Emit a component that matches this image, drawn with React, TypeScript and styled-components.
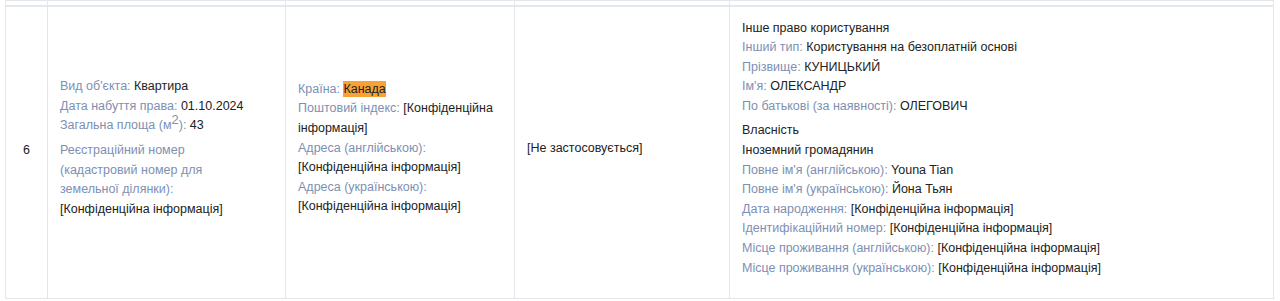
import React from 'react'
import styled, { createGlobalStyle } from 'styled-components'

const GlobalStyle = createGlobalStyle`
  body {
    margin: 0;
    background: #fff;
    font-family: "Liberation Sans", Arial, sans-serif;
  }
`;

const Table = styled.table`
  margin-left: 5px;
  width: 1268px;
  border-collapse: collapse;
  table-layout: fixed;
  font-size: 12.5px;
  line-height: 19.6px;
  color: #222;

  td {
    border: 1px solid #e3e6ea;
    padding: 12px 12px 15px;
    vertical-align: middle;
  }
`;

const StubRow = styled.tr`
  height: 5px;

  td {
    padding: 0;
    border-bottom: 2px solid #e3e6ea;
  }
`;

const NumCell = styled.td`
  text-align: center;
`;

const Group = styled.div<{ $max?: number }>`
  margin-bottom: 5px;
  max-width: ${(p) => (p.$max ? `${p.$max}px` : 'none')};
`;

const Line = styled.div``;

const Label = styled.span`
  color: #7d8fb3;

  sup {
    font-size: 13px;
    line-height: 0;
  }
`;

const Mark = styled.span`
  background: #f7a136;
  color: #222;
  padding: 1px 0;
`;

interface IField {
  label?: React.ReactNode;
  value?: React.ReactNode;
}

function Fields({ items }: { items: IField[] }) {
  return (
    <Group>
      {items.map((f, i) => (
        <Line key={i}>
          {f.label && <Label>{f.label}: </Label>}
          {f.value}
        </Line>
      ))}
    </Group>
  );
}

const widths = [42, 238, 229, 215, 544];
const CONF = '[Конфіденційна інформація]';

export default function App() {
  return (
    <>
      <GlobalStyle />
      <Table>
        <colgroup>
          {widths.map((w, i) => (
            <col key={i} style={{ width: w }} />
          ))}
        </colgroup>
        <tbody>
          <StubRow>
            {widths.map((_, i) => (
              <td key={i} />
            ))}
          </StubRow>
          <tr>
            <NumCell>6</NumCell>
            <td>
              <Fields
                items={[
                  { label: "Вид об'єкта", value: 'Квартира' },
                  { label: 'Дата набуття права', value: '01.10.2024' },
                  { label: <>Загальна площа (м<sup>2</sup>)</>, value: '43' },
                ]}
              />
              <Group $max={192}>
                <Label>Реєстраційний номер (кадастровий номер для земельної ділянки): </Label>
                {CONF}
              </Group>
            </td>
            <td>
              <Group $max={202}>
                <Label>Країна: </Label>
                <Mark>Канада</Mark>
                <br />
                <Label>Поштовий індекс: </Label>
                {CONF}
                <br />
                <Label>Адреса (англійською): </Label>
                {CONF}
                <br />
                <Label>Адреса (українською): </Label>
                {CONF}
              </Group>
            </td>
            <td>
              <Group>[Не застосовується]</Group>
            </td>
            <td>
              <Fields
                items={[
                  { value: 'Інше право користування' },
                  { label: 'Інший тип', value: 'Користування на безоплатній основі' },
                  { label: 'Прізвище', value: 'КУНИЦЬКИЙ' },
                  { label: "Ім'я", value: 'ОЛЕКСАНДР' },
                  { label: 'По батькові (за наявності)', value: 'ОЛЕГОВИЧ' },
                ]}
              />
              <Fields
                items={[
                  { value: 'Власність' },
                  { value: 'Іноземний громадянин' },
                  { label: "Повне ім'я (англійською)", value: 'Youna Tian' },
                  { label: "Повне ім'я (українською)", value: 'Йона Тьян' },
                  { label: 'Дата народження', value: CONF },
                  { label: 'Ідентифікаційний номер', value: CONF },
                  { label: 'Місце проживання (англійською)', value: CONF },
                  { label: 'Місце проживання (українською)', value: CONF },
                ]}
              />
            </td>
          </tr>
        </tbody>
      </Table>
    </>
  );
}
